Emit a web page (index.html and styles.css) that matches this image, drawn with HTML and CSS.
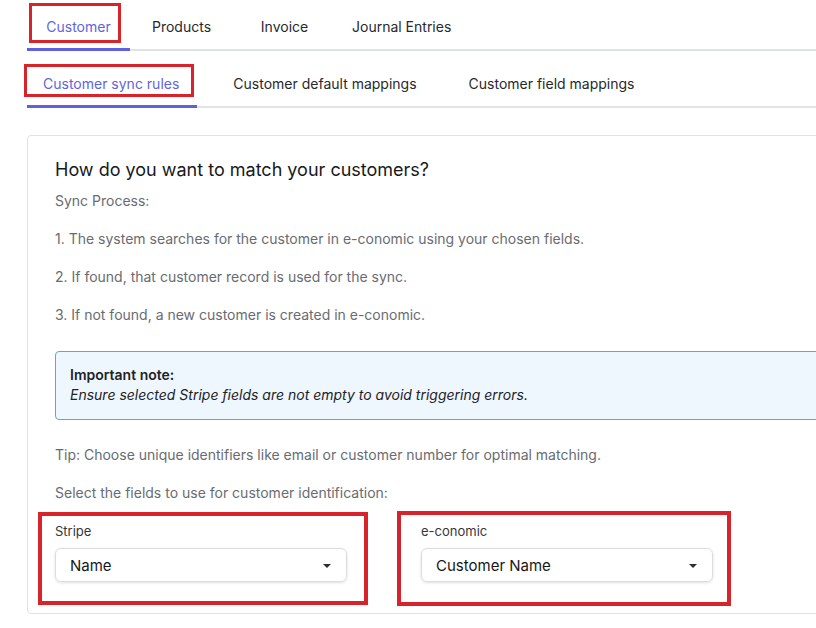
FILE: index.html
```html
<!DOCTYPE html>
<html lang="en">
<head>
<meta charset="UTF-8" />
<meta name="viewport" content="width=device-width, initial-scale=1" />
<title>Customer sync rules</title>
<link rel="stylesheet" href="styles.css">
</head>
<body>

<div class="page">
  <nav class="tabs tabs-main">
    <div class="tab active">Customer<span class="mark mark-tab"></span></div>
    <div class="tab">Products</div>
    <div class="tab">Invoice</div>
    <div class="tab">Journal Entries</div>
  </nav>

  <nav class="tabs tabs-sub">
    <div class="tab active">Customer sync rules<span class="mark mark-subtab"></span></div>
    <div class="tab">Customer default mappings</div>
    <div class="tab">Customer field mappings</div>
  </nav>

  <section class="card">
    <h2 class="card-title">How do you want to match your customers?</h2>
    <p class="muted">Sync Process:</p>
    <p class="muted">1. The system searches for the customer in e-conomic using your chosen fields.</p>
    <p class="muted">2. If found, that customer record is used for the sync.</p>
    <p class="muted">3. If not found, a new customer is created in e-conomic.</p>

    <div class="note">
      <strong>Important note:</strong>
      <em>Ensure selected Stripe fields are not empty to avoid triggering errors.</em>
    </div>

    <p class="muted tip">Tip: Choose unique identifiers like email or customer number for optimal matching.</p>
    <p class="muted">Select the fields to use for customer identification:</p>

    <div class="fields">
      <div class="field">
        <label class="field-label">Stripe</label>
        <div class="select">Name<span class="caret"></span></div>
        <span class="mark mark-stripe"></span>
      </div>
      <div class="field">
        <label class="field-label">e-conomic</label>
        <div class="select">Customer Name<span class="caret"></span></div>
        <span class="mark mark-economic"></span>
      </div>
    </div>
  </section>
</div>

</body>
</html>
```

FILE: styles.css
```css
body {
  margin: 0;
  background: #fff;
  font-family: Inter, "Noto Sans", Arial, sans-serif;
  color: #24272b;
  overflow: hidden;
}
.page {
  width: 900px;
  margin-left: 27px;
}

/* tabs */
.tabs {
  display: flex;
  border-bottom: 2px solid #dfe3e8;
}
.tab {
  position: relative;
  font-size: 14px;
  text-align: center;
  white-space: nowrap;
  color: #26292d;
  margin-bottom: -2px;
  border-bottom: 3px solid transparent;
}
.tab.active {
  color: #6165dc;
  border-bottom-color: #5e60dc;
}
.tabs-main .tab {
  min-width: 71px;
  height: 43px;
  line-height: 43px;
  padding: 5px 16px 0;
}
.tabs-sub {
  margin-top: 12px;
  gap: 20px;
}
.tabs-sub .tab {
  height: 42px;
  line-height: 42px;
  padding: 0 16px;
}
.tabs-sub .tab.active {
  padding-right: 18px;
}

/* red annotation boxes */
.mark {
  position: absolute;
  border: 3px solid #d6242a;
  pointer-events: none;
}
.mark-tab {
  left: 2px;
  top: 3px;
  width: 86px;
  height: 34px;
}
.mark-subtab {
  left: -3px;
  top: 1px;
  width: 164px;
  height: 27px;
}
.mark-stripe {
  left: -17px;
  top: -9px;
  width: 322px;
  height: 85px;
  border-width: 4px;
}
.mark-economic {
  left: -24px;
  top: -10px;
  width: 326px;
  height: 87px;
  border-width: 4px;
}

/* card */
.card {
  margin-top: 27px;
  border: 1px solid #e1e1e1;
  border-radius: 4px;
  padding: 22px 27px 31px;
}
.card-title {
  margin: 0 0 9px;
  font-size: 18px;
  line-height: 24px;
  font-weight: 400;
  color: #17191c;
}
.muted {
  margin: 0 0 18px;
  font-size: 14px;
  line-height: 20px;
  color: #686c72;
}
.note {
  margin: 26px 0 25px;
  padding: 13px 14px 14px;
  border: 1px solid #56aec6;
  border-radius: 4px;
  background: #eef7fe;
  font-size: 14px;
  line-height: 20px;
  color: #1f2226;
}
.note strong,
.note em {
  display: block;
}
.note strong {
  font-weight: 600;
}

/* fields */
.fields {
  display: grid;
  grid-template-columns: 292px 292px;
  gap: 74px;
}
.field {
  position: relative;
}
.field-label {
  display: block;
  font-size: 13px;
  line-height: 18px;
  color: #34373b;
  margin: 1px 0 8px;
}
.select {
  position: relative;
  height: 32px;
  line-height: 33px;
  padding: 0 14px;
  border: 1px solid #dadcdf;
  border-radius: 6px;
  box-shadow: 0 1px 3px rgba(0, 0, 0, 0.12);
  font-size: 15px;
  color: #15171a;
}
.caret {
  position: absolute;
  right: 15px;
  top: 15px;
  border-left: 4px solid transparent;
  border-right: 4px solid transparent;
  border-top: 4px solid #2b2e32;
}
```
